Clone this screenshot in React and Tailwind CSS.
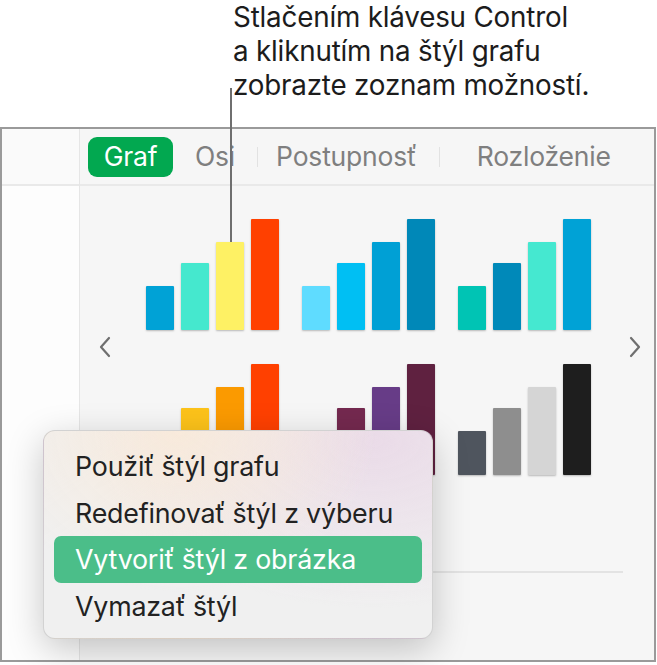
import React from "react";

const font = { fontFamily: "Inter, 'Noto Sans', sans-serif" };

function Bar({ h, color }) {
  return (
    <div
      className="w-[28px] rounded-[1px] shadow-[0_1px_2px_rgba(0,0,0,0.25)]"
      style={{ height: h, background: color }}
    />
  );
}

function Chart({ colors }) {
  const hs = [44, 67, 88, 111];
  return (
    <div className="flex items-end gap-[7px] h-[111px]">
      {colors.map((c, i) => (
        <Bar key={i} h={hs[i]} color={c} />
      ))}
    </div>
  );
}

function Chevron({ dir }) {
  return (
    <svg width="14" height="22" viewBox="0 0 14 22" fill="none">
      {dir === "left" ? (
        <path d="M11 2 L3 11 L11 20" stroke="#6f6f6f" strokeWidth="2.2" strokeLinecap="round" strokeLinejoin="round" />
      ) : (
        <path d="M3 2 L11 11 L3 20" stroke="#6f6f6f" strokeWidth="2.2" strokeLinecap="round" strokeLinejoin="round" />
      )}
    </svg>
  );
}

export default function App() {
  const charts = [
    ["#00a2d6", "#45e8ce", "#fef164", "#ff4000"],
    ["#5fdcff", "#00bff3", "#00a0d5", "#0088b8"],
    ["#00c4b4", "#0089b9", "#45e8d0", "#00a2d6"],
    ["#fdc31a", "#fdc31a", "#fb9a00", "#ff4000"],
    ["#8a3a60", "#74294f", "#673c87", "#5f2140"],
    ["#4f555e", "#8e8e8e", "#d5d5d5", "#1e1e1e"],
  ];
  return (
    <div className="relative w-[657px] h-[665px] bg-white overflow-hidden" style={font}>
      {/* callout text */}
      <div className="h-[127px] pl-[233px] pt-[0px] text-[27.8px] leading-[34px] text-[#1c1c1c] tracking-[-0.2px]">
        <div>Stlačením klávesu Control</div>
        <div>a kliknutím na štýl grafu</div>
        <div>zobrazte zoznam možností.</div>
      </div>

      {/* frame */}
      <div className="flex w-[656px] h-[535px] border-2 border-[#9a9a9a]">
        {/* sidebar */}
        <div className="w-[78px] flex flex-col border-r border-[#e6e6e6] bg-[#fdfdfd]">
          <div className="h-[57px] bg-[#fafafa] border-b-2 border-[#e9e9e9]" />
        </div>
        {/* main */}
        <div className="flex-1 flex flex-col bg-[#f6f6f6]">
          <div className="h-[57px] flex items-center border-b-2 border-[#e9e9e9] text-[26.5px] tracking-[-0.2px] text-[#7f7f7f]">
            <div className="ml-[8px] h-[40px] w-[85px] rounded-[9px] bg-[#02a850] text-white flex items-center justify-center">
              Graf
            </div>
            <div className="ml-[22px]">Osi</div>
            <div className="ml-[22px] w-px h-[20px] bg-[#e2e2e2]" />
            <div className="ml-[18px]">Postupnosť</div>
            <div className="ml-[22px] w-px h-[20px] bg-[#e2e2e2]" />
            <div className="ml-[37px]">Rozloženie</div>
          </div>

          <div className="flex items-center pt-[33px]">
            <div className="ml-[18px] w-[14px] flex">
              <Chevron dir="left" />
            </div>
            <div className="ml-[34px] grid grid-cols-3 gap-x-[23px] gap-y-[34px]">
              {charts.map((c, i) => (
                <Chart key={i} colors={c} />
              ))}
            </div>
            <div className="ml-[37px] w-[14px] flex">
              <Chevron dir="right" />
            </div>
          </div>

          <div className="ml-[40px] mt-[96px] w-[503px] h-[2px] bg-[#e3e3e3]" />
        </div>
      </div>

      {/* callout line */}
      <div className="absolute left-[230px] top-[88px] w-[2px] h-[154px] bg-[#6f6f6f]" />

      {/* context menu */}
      <div className="absolute left-[43px] top-[430px] w-[390px] h-[209px] rounded-[12px] border border-[rgba(0,0,0,0.12)] shadow-[0_10px_36px_rgba(0,0,0,0.22)] bg-[#f0f0f0] bg-[image:radial-gradient(ellipse_at_35%_0%,#f8eadb_0%,rgba(248,234,219,0)_55%),radial-gradient(ellipse_at_85%_5%,#eadbe8_0%,rgba(234,219,232,0)_60%)] pt-[12px] px-[10px] text-[26.8px] tracking-[-0.2px] text-[#222]">
        <div className="h-[47px] flex items-center pl-[21px]">Použiť štýl grafu</div>
        <div className="h-[46px] flex items-center pl-[21px]">Redefinovať štýl z výberu</div>
        <div className="h-[47px] flex items-center pl-[21px] rounded-[7px] bg-[#4bbe89] text-white">
          Vytvoriť štýl z obrázka
        </div>
        <div className="h-[47px] flex items-center pl-[21px]">Vymazať štýl</div>
      </div>
    </div>
  );
}
